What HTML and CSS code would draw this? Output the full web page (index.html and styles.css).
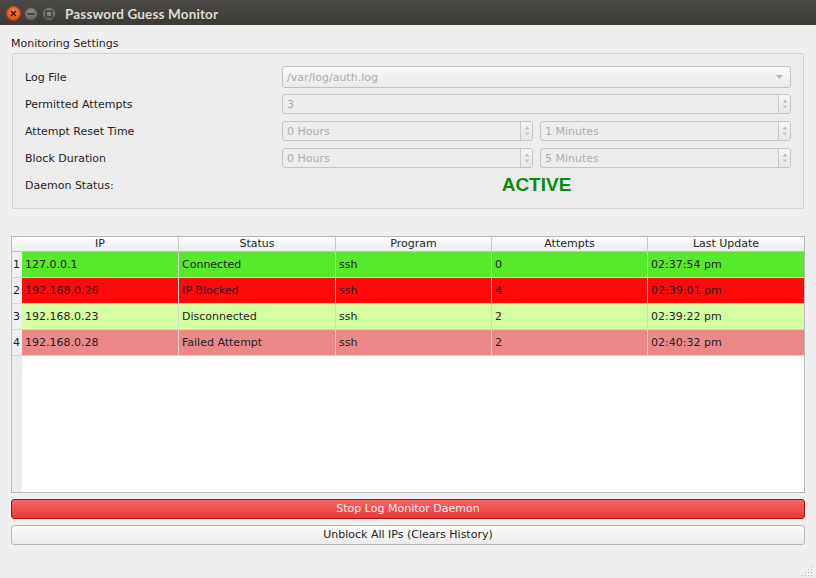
FILE: index.html
```html
<!DOCTYPE html>
<html>
<head>
<meta charset="utf-8">
<title>Password Guess Monitor</title>
<link rel="stylesheet" href="styles.css">
</head>
<body>
<div class="window">
  <div class="titlebar">
    <div class="wbtns">
      <span class="wbtn close"><svg width="7" height="7" viewBox="0 0 7 7"><path d="M1 1L6 6M6 1L1 6" stroke="#3a1606" stroke-width="1.3" fill="none"/></svg></span>
      <span class="wbtn min"><svg width="8" height="8" viewBox="0 0 8 8"><path d="M0.5 4H7.5" stroke="#3b3a36" stroke-width="1.6"/></svg></span>
      <span class="wbtn max"><svg width="8" height="8" viewBox="0 0 8 8"><rect x="1" y="1" width="6" height="6" fill="none" stroke="#3b3a36" stroke-width="1.4"/></svg></span>
    </div>
    <div class="title">Password Guess Monitor</div>
  </div>

  <div class="main">
    <div class="group-title">Monitoring Settings</div>
    <div class="group">
      <div class="label">Log File</div>
      <div class="combo">
        <span class="ftext">/var/log/auth.log</span>
        <svg class="combo-arrow" width="7" height="4" viewBox="0 0 7 4"><path d="M0 0H7L3.5 4Z" fill="#b8b8b8"/></svg>
      </div>

      <div class="label">Permitted Attempts</div>
      <div class="spin">
        <span class="ftext">3</span>
        <span class="arrows"><svg width="10" height="18" viewBox="0 0 10 18"><path d="M2.5 7.5H7.5L5 4.5Z" fill="#bdbdbd"/><path d="M2.5 10.5H7.5L5 13.5Z" fill="#c8c8c8"/></svg></span>
      </div>

      <div class="label">Attempt Reset Time</div>
      <div class="pair">
        <div class="spin">
          <span class="ftext">0 Hours</span>
          <span class="arrows"><svg width="10" height="18" viewBox="0 0 10 18"><path d="M2.5 7.5H7.5L5 4.5Z" fill="#bdbdbd"/><path d="M2.5 10.5H7.5L5 13.5Z" fill="#c8c8c8"/></svg></span>
        </div>
        <div class="spin">
          <span class="ftext">1 Minutes</span>
          <span class="arrows"><svg width="10" height="18" viewBox="0 0 10 18"><path d="M2.5 7.5H7.5L5 4.5Z" fill="#bdbdbd"/><path d="M2.5 10.5H7.5L5 13.5Z" fill="#c8c8c8"/></svg></span>
        </div>
      </div>

      <div class="label">Block Duration</div>
      <div class="pair">
        <div class="spin">
          <span class="ftext">0 Hours</span>
          <span class="arrows"><svg width="10" height="18" viewBox="0 0 10 18"><path d="M2.5 7.5H7.5L5 4.5Z" fill="#bdbdbd"/><path d="M2.5 10.5H7.5L5 13.5Z" fill="#c8c8c8"/></svg></span>
        </div>
        <div class="spin">
          <span class="ftext">5 Minutes</span>
          <span class="arrows"><svg width="10" height="18" viewBox="0 0 10 18"><path d="M2.5 7.5H7.5L5 4.5Z" fill="#bdbdbd"/><path d="M2.5 10.5H7.5L5 13.5Z" fill="#c8c8c8"/></svg></span>
        </div>
      </div>

      <div class="label">Daemon Status:</div>
      <div class="status">ACTIVE</div>
    </div>

    <div class="table">
      <div class="row thead">
        <div class="corner"></div>
        <div>IP</div>
        <div>Status</div>
        <div>Program</div>
        <div>Attempts</div>
        <div>Last Update</div>
      </div>
      <div class="row trow connected">
        <div class="rh">1</div>
        <div>127.0.0.1</div>
        <div>Connected</div>
        <div>ssh</div>
        <div>0</div>
        <div>02:37:54 pm</div>
      </div>
      <div class="row trow blocked">
        <div class="rh">2</div>
        <div>192.168.0.26</div>
        <div>IP Blocked</div>
        <div>ssh</div>
        <div>4</div>
        <div>02:39:01 pm</div>
      </div>
      <div class="row trow disconnected">
        <div class="rh">3</div>
        <div>192.168.0.23</div>
        <div>Disconnected</div>
        <div>ssh</div>
        <div>2</div>
        <div>02:39:22 pm</div>
      </div>
      <div class="row trow failed">
        <div class="rh">4</div>
        <div>192.168.0.28</div>
        <div>Failed Attempt</div>
        <div>ssh</div>
        <div>2</div>
        <div>02:40:32 pm</div>
      </div>
    </div>

    <button class="btn stop">Stop Log Monitor Daemon</button>
    <button class="btn plain">Unblock All IPs (Clears History)</button>
  </div>

  <svg class="grip" width="12" height="12" viewBox="0 0 12 12">
    <rect x="9" y="1" width="1" height="1" fill="#b5b5b5"/>
    <rect x="6" y="4" width="1" height="1" fill="#b5b5b5"/>
    <rect x="9" y="4" width="1" height="1" fill="#b5b5b5"/>
    <rect x="3" y="7" width="1" height="1" fill="#b5b5b5"/>
    <rect x="6" y="7" width="1" height="1" fill="#b5b5b5"/>
    <rect x="9" y="7" width="1" height="1" fill="#b5b5b5"/>
    <rect x="0" y="10" width="1" height="1" fill="#b5b5b5"/>
    <rect x="3" y="10" width="1" height="1" fill="#b5b5b5"/>
    <rect x="6" y="10" width="1" height="1" fill="#b5b5b5"/>
    <rect x="9" y="10" width="1" height="1" fill="#b5b5b5"/>
  </svg>
</div>
</body>
</html>
```

FILE: styles.css
```css
* { box-sizing: border-box; }

html, body {
  margin: 0;
  padding: 0;
}

body {
  width: 816px;
  height: 578px;
  overflow: hidden;
  background: #efefef;
  font-family: "DejaVu Sans", sans-serif;
  font-size: 11px;
  color: #1f1f1f;
}

.window {
  position: relative;
  width: 816px;
  height: 578px;
}

/* ---------- title bar ---------- */
.titlebar {
  height: 25px;
  display: flex;
  align-items: center;
  background: linear-gradient(#4b4a46, #3c3b37);
}

.wbtns {
  display: flex;
  align-items: center;
  gap: 2px;
  padding: 2px 0 0 6px;
}

.wbtn {
  width: 15px;
  height: 15px;
  border-radius: 50%;
  display: flex;
  align-items: center;
  justify-content: center;
}

.wbtn.close {
  background: radial-gradient(circle at 50% 35%, #f8835a, #e45a26 55%, #bd4317);
  box-shadow: inset 0 0 0 1px rgba(60, 20, 0, 0.35);
}

.wbtn.min,
.wbtn.max {
  width: 14px;
  height: 14px;
  background: radial-gradient(circle at 50% 35%, #8d8c87, #6d6c67 55%, #585752);
  box-shadow: inset 0 0 0 1px rgba(0, 0, 0, 0.35);
}

.wbtn.min { margin-left: 1px; }
.wbtn.max { margin-left: 2px; }

.title {
  margin-left: 9px;
  padding-top: 2px;
  font-family: Lato, "DejaVu Sans", sans-serif;
  font-weight: 700;
  font-size: 13.5px;
  color: #dfdbd2;
  letter-spacing: 0.15px;
}

/* ---------- main ---------- */
.main {
  padding: 12px 11px 0;
}

.group-title {
  line-height: 14px;
  margin-bottom: 2px;
}

.group {
  margin: 0 1px;
  border: 1px solid #d2d2d2;
  border-radius: 2px;
  background: #ececec;
  padding: 12px 12px 13px;
  display: grid;
  grid-template-columns: 257px 1fr;
  grid-auto-rows: 21px;
  row-gap: 6px;
  align-items: center;
}

.label {
  color: #1f1f1f;
  padding-top: 2px;
}

.ftext {
  color: #acacac;
  padding-top: 1px;
}

.combo {
  height: 22px;
  border: 1px solid #c2c2c2;
  border-radius: 3px;
  background: linear-gradient(#f8f8f8, #e9e9e9);
  display: flex;
  align-items: center;
  justify-content: space-between;
  padding: 0 7px 0 4px;
}

.spin {
  height: 20px;
  border: 1px solid #c4c4c4;
  border-radius: 3px;
  background: #ececec;
  display: flex;
  align-items: center;
  justify-content: space-between;
  padding-left: 4px;
}

.arrows {
  width: 12px;
  height: 100%;
  border-left: 1px solid #c8c8c8;
  display: flex;
  align-items: center;
  justify-content: center;
  background: linear-gradient(#f4f4f4, #e6e6e6);
  border-radius: 0 2px 2px 0;
}

.pair {
  display: grid;
  grid-template-columns: 1fr 1fr;
  column-gap: 7px;
}

.status {
  text-align: center;
  font-family: "Liberation Sans", Arial, sans-serif;
  font-weight: 700;
  font-size: 19px;
  color: #0b8a0b;
  line-height: 21px;
}

/* ---------- table ---------- */
.table {
  margin-top: 27px;
  height: 257px;
  border: 1px solid #b9b9b9;
  background: linear-gradient(to right, #ececec 10px, #ffffff 10px);
}

.row {
  display: grid;
  grid-template-columns: 10px 157px 157px 156px 156px 1fr;
}

.thead {
  height: 15px;
  border-bottom: 1px solid #c2c2c2;
  background: linear-gradient(#fdfdfd, #ececec);
}

.thead > div {
  border-right: 1px solid #cbcbcb;
  text-align: center;
  line-height: 14px;
  color: #1f1f1f;
}

.thead > .corner {
  border-right: none;
}

.thead > div:last-child {
  border-right: none;
}

.trow {
  height: 26px;
}

.trow > div {
  border-bottom: 1px solid #d4d4d4;
  border-right: 1px solid #d4d4d4;
  padding-left: 3px;
  line-height: 25px;
  white-space: nowrap;
  overflow: hidden;
}

.trow > div:last-child {
  border-right: none;
}

.trow > .rh {
  background: #efefef;
  border-right: none;
  padding-left: 1px;
  color: #1f1f1f;
}

.connected > div:not(.rh) { background: #58e82c; }
.blocked > div:not(.rh) { background: #ff0909; }
.disconnected > div:not(.rh) { background: #d5fea1; }
.failed > div:not(.rh) { background: #ed8888; }

/* ---------- buttons ---------- */
.btn {
  display: block;
  width: 100%;
  height: 20px;
  margin-top: 6px;
  padding: 0;
  border-radius: 3px;
  font-family: "DejaVu Sans", sans-serif;
  font-size: 11px;
  line-height: 18px;
  text-align: center;
}

.btn.stop {
  background: linear-gradient(#fb6464, #e73a3a);
  border: 1px solid #a51414;
  color: #ffeeee;
}

.btn.plain {
  background: linear-gradient(#fbfbfb, #ebebeb);
  border: 1px solid #b6b6b6;
  color: #1f1f1f;
}

.grip {
  position: absolute;
  right: 2px;
  bottom: 1px;
}
```
